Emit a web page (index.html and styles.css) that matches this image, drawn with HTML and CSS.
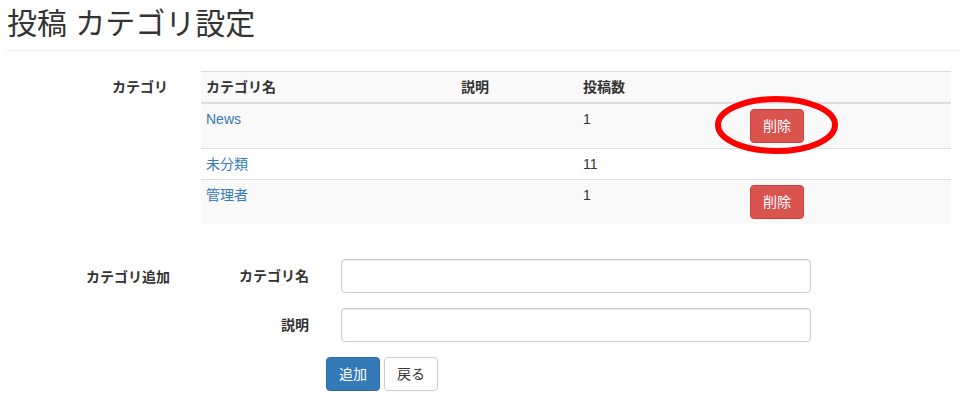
FILE: index.html
```html
<!DOCTYPE html>
<html lang="ja">
<head>
  <meta charset="UTF-8" />
  <title>投稿 カテゴリ設定</title>
  <link rel="stylesheet" href="styles.css">
</head>
<body>

<div class="page">
  <h2 class="page-title">投稿 カテゴリ設定</h2>

  <!-- カテゴリ一覧 -->
  <div class="section">
    <div class="section-label">カテゴリ</div>
    <table class="cat-table">
      <thead>
        <tr>
          <th class="col-name">カテゴリ名</th>
          <th class="col-desc">説明</th>
          <th class="col-count">投稿数</th>
          <th></th>
        </tr>
      </thead>
      <tbody>
        <tr>
          <td><a href="#">News</a></td>
          <td></td>
          <td>1</td>
          <td>
            <span class="mark">
              <button class="btn btn-danger">削除</button>
              <svg class="mark-ring" width="123" height="58" viewBox="0 0 123 58">
                <ellipse cx="61.5" cy="29" rx="58.5" ry="26" fill="none" stroke="#f00" stroke-width="6" />
              </svg>
            </span>
          </td>
        </tr>
        <tr>
          <td><a href="#">未分類</a></td>
          <td></td>
          <td>11</td>
          <td></td>
        </tr>
        <tr>
          <td><a href="#">管理者</a></td>
          <td></td>
          <td>1</td>
          <td><button class="btn btn-danger">削除</button></td>
        </tr>
      </tbody>
    </table>
  </div>

  <!-- カテゴリ追加 -->
  <div class="section section-add">
    <div class="section-label label-add">カテゴリ追加</div>
    <form class="add-form">
      <label class="field-label">カテゴリ名</label>
      <div class="field"><input type="text" class="form-control" /></div>
      <label class="field-label">説明</label>
      <div class="field"><input type="text" class="form-control" /></div>
      <div></div>
      <div class="actions">
        <button type="button" class="btn btn-primary">追加</button>
        <button type="button" class="btn btn-default">戻る</button>
      </div>
    </form>
  </div>
</div>

</body>
</html>
```

FILE: styles.css
```css
body {
  font-family: 'Liberation Sans', 'Noto Sans CJK JP', sans-serif;
  font-size: 14px;
  line-height: 20px;
  color: #333;
  background-color: #fff;
  margin: 0;
  padding: 0;
}

a {
  color: #337ab7;
  text-decoration: none;
}

.page {
  padding-left: 6px;
}

.page-title {
  font-size: 30px;
  font-weight: normal;
  line-height: 33px;
  margin: 7px 0 0;
  padding: 0 0 10px 1px;
  border-bottom: 1px solid #eee;
}

.section {
  display: grid;
  grid-template-columns: 195px 750px;
  margin-top: 20px;
}

.section-label {
  font-weight: bold;
  text-align: right;
  padding: 6px 33px 0 0;
}

.cat-table {
  width: 750px;
  border-collapse: collapse;
  border-spacing: 0;
}

.cat-table th,
.cat-table td {
  text-align: left;
  vertical-align: top;
  padding: 5px;
  border-top: 1px solid #ddd;
}

.cat-table th {
  font-weight: bold;
  border-bottom: 2px solid #ddd;
}

.cat-table thead tr,
.cat-table tbody tr:nth-child(odd) {
  background-color: #f9f9f9;
}

.col-name {
  width: 245px;
}

.col-desc {
  width: 112px;
}

.col-count {
  width: 157px;
}

.btn {
  display: inline-block;
  font-family: inherit;
  font-size: 14px;
  line-height: 20px;
  padding: 6px 12px;
  border: 1px solid transparent;
  border-radius: 4px;
  cursor: pointer;
  vertical-align: middle;
}

.btn-danger {
  color: #fff;
  background-color: #d9534f;
  border-color: #d43f3a;
}

.btn-primary {
  color: #fff;
  background-color: #337ab7;
  border-color: #2e6da4;
}

.btn-default {
  color: #333;
  background-color: #fff;
  border-color: #ccc;
}

.mark {
  position: relative;
  display: inline-block;
}

.mark-ring {
  position: absolute;
  left: -35px;
  top: -13px;
  pointer-events: none;
}

.section-add {
  margin-top: 35px;
}

.label-add {
  padding: 8px 31px 0 0;
}

.add-form {
  display: grid;
  grid-template-columns: 125px 485px;
  row-gap: 15px;
  margin: 0;
}

.field-label {
  font-weight: bold;
  text-align: right;
  padding: 7px 17px 0 0;
}

.field {
  padding-left: 15px;
}

.form-control {
  display: block;
  box-sizing: border-box;
  width: 100%;
  height: 34px;
  padding: 6px 12px;
  font-size: 14px;
  border: 1px solid #ccc;
  border-radius: 4px;
  box-shadow: inset 0 1px 1px rgba(0, 0, 0, 0.075);
}

.actions {
  display: flex;
  gap: 4px;
  margin-left: -125px;
  padding-left: 125px;
}
```
